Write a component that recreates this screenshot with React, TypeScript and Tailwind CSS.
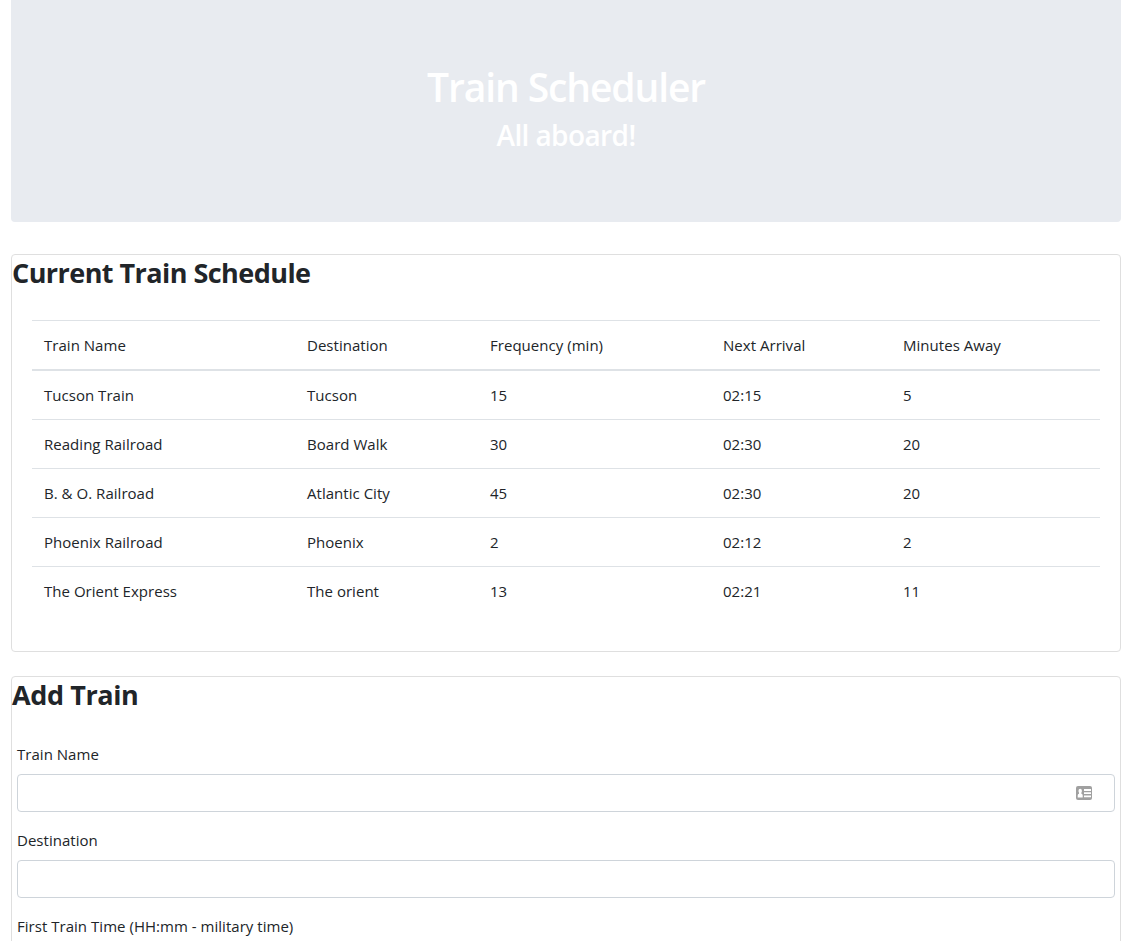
const columns = ["Train Name", "Destination", "Frequency (min)", "Next Arrival", "Minutes Away"];

const trains = [
  ["Tucson Train", "Tucson", "15", "02:15", "5"],
  ["Reading Railroad", "Board Walk", "30", "02:30", "20"],
  ["B. & O. Railroad", "Atlantic City", "45", "02:30", "20"],
  ["Phoenix Railroad", "Phoenix", "2", "02:12", "2"],
  ["The Orient Express", "The orient", "13", "02:21", "11"],
];

function ContactIcon() {
  return (
    <svg width="16" height="14" viewBox="0 0 16 14" className="shrink-0">
      <rect width="16" height="14" rx="2" fill="#a0a0a0" />
      <path
        d="M1.7 11.5V9.4Q1.7 8.2 3 7.8V6.6Q2.5 6 2.5 4.7Q2.5 2.8 4.2 2.8T5.9 4.7Q5.9 6 5.4 6.6V7.8Q6.7 8.2 6.7 9.4V11.5ZM8 3H15V5H8ZM8 6.2H15V8H8ZM8 9.5H15V11.3H8Z"
        fill="#fff"
      />
    </svg>
  );
}

function Field({ label, icon }: { label: string; icon?: boolean }) {
  return (
    <div className="mb-4">
      <label className="mb-2 block leading-6">{label}</label>
      <div className="flex h-[38px] items-center rounded border border-[#ced4da] bg-white pr-[22px] pl-3">
        <input className="min-w-0 flex-1 outline-none" />
        {icon && <ContactIcon />}
      </div>
    </div>
  );
}

export default function App() {
  return (
    <div className="h-[941px] overflow-hidden bg-white px-[11px] font-['Open_Sans',sans-serif] text-[15px] tracking-[0.03px] text-[#212529]">
      <header className="mb-8 h-[222px] rounded-b bg-[#e8ebf0] pt-[63px] text-center font-semibold text-white">
        <h1 className="mb-[7px] text-[39px] leading-[48px] tracking-[-1.1px]">Train Scheduler</h1>
        <h2 className="text-[28px] leading-[34px] tracking-[-0.6px]">All aboard!</h2>
      </header>

      <section className="mb-6 h-[398px] rounded border border-[#dfdfdf]">
        <h2 className="mb-[11px] pt-px text-[27px] leading-[34px] font-bold tracking-[-0.55px]">Current Train Schedule</h2>
        <div className="px-5 pt-[19px]">
          <table className="w-full table-fixed border-separate border-spacing-0 text-left">
            <colgroup>
              <col className="w-[263px]" />
              <col className="w-[183px]" />
              <col className="w-[233px]" />
              <col className="w-[180px]" />
              <col />
            </colgroup>
            <thead>
              <tr>
                {columns.map((column) => (
                  <th key={column} className="border-t border-b-2 border-[#dee2e6] p-3 leading-6 font-normal">
                    {column}
                  </th>
                ))}
              </tr>
            </thead>
            <tbody className="[&>tr:first-child>td]:border-t-0">
              {trains.map((train) => (
                <tr key={train[0]}>
                  {train.map((value, i) => (
                    <td key={i} className="border-t border-[#dee2e6] p-3 leading-6">
                      {value}
                    </td>
                  ))}
                </tr>
              ))}
            </tbody>
          </table>
        </div>
      </section>

      <section className="h-[400px] rounded border border-[#dfdfdf]">
        <h2 className="mb-[30px] pt-px text-[27px] leading-[34px] font-bold tracking-[-0.4px]">Add Train</h2>
        <form className="px-[5px]">
          <Field label="Train Name" icon />
          <Field label="Destination" />
          <Field label="First Train Time (HH:mm - military time)" />
        </form>
      </section>
    </div>
  );
}
